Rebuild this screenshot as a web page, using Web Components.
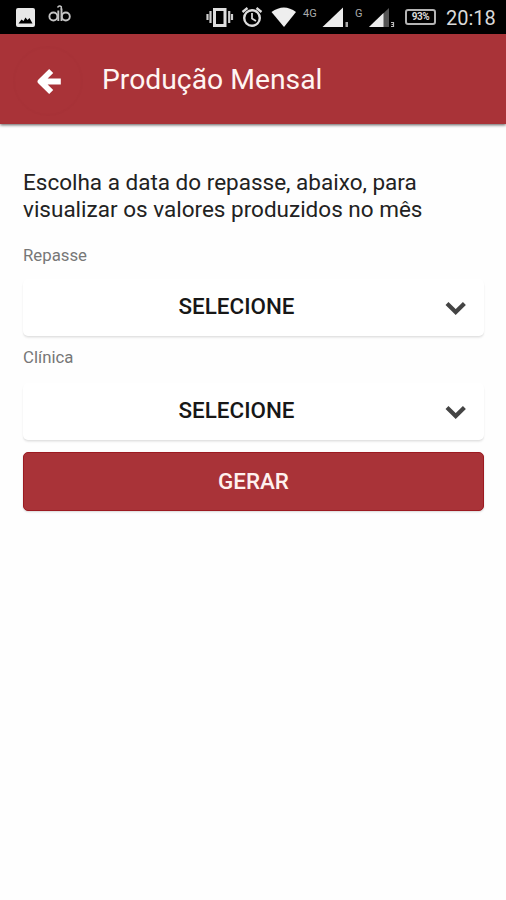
<!DOCTYPE html>
<html lang="pt-BR">
<head>
<meta charset="utf-8">
<title>Produção Mensal</title>
<style>
html, body { margin: 0; background: #fefefe; }
body { font-family: Roboto, "Liberation Sans", sans-serif; color: #222; }
</style>
</head>
<body>
<app-screen></app-screen>
<script>
const define = (name, html) => customElements.define(name, class extends HTMLElement {
  constructor() {
    super();
    this.attachShadow({ mode: 'open' }).innerHTML = html;
  }
});

define('status-bar', `
<style>
:host { display: flex; height: 34px; background: #000; color: #d9d9d9; align-items: flex-start; }
svg { display: block; flex: none; height: 34px; }
span { flex: none; white-space: nowrap; }
.space { flex: 1; }
.net { font-size: 11px; line-height: 12px; margin-top: 8px; color: #aaa; }
.battery { box-sizing: border-box; width: 31px; height: 16px; margin: 9px 10px 0 9px; border: 2px solid #b4b4b4; border-radius: 3px; font-size: 10px; line-height: 12px; font-weight: 700; text-align: center; letter-spacing: -.5px; }
.time { font-size: 20px; line-height: 24px; margin-top: 6px; width: 60px; }
</style>
<svg width="80" viewBox="0 0 80 34"><path fill="#e8e8e8" fill-rule="evenodd" d="M18 8H33Q35 8 35 10V25Q35 27 33 27H18Q16 27 16 25V10Q16 8 18 8ZM18.500 23.500H32.500L29.500 18L27.500 20L25.500 17.500L23.500 21L21.500 19.500Z"/>
<g fill="none" stroke="#c4c4c4" stroke-width="1.900"><circle cx="53.400" cy="16.500" r="4"/><circle cx="65.800" cy="16.500" r="4"/><path d="M58.300 10.500V21M61.500 8.500V21"/><path stroke-width="1.500" d="M57.500 7.500Q59.500 5 61.300 6.800V9.500"/></g></svg>
<div class="space"></div>
<svg width="98" viewBox="205 0 98 34"><path fill="none" stroke="#dedede" stroke-width="3" d="M214.500 9.500H225V25.500H214.500Z"/><path stroke="#cfcfcf" stroke-width="2.200" d="M210.500 11V23M229.200 11V23M207.500 14V20M232 14V20"/>
<g fill="none" stroke="#ddd"><circle cx="252" cy="18" r="7.800" stroke-width="2.400"/><path stroke-width="1.700" d="M252 13V18.500L256 21"/><path stroke-width="2.300" d="M242.500 12L247.500 8M256.500 8L261.500 12"/></g>
<path fill="#eee" d="M271.500 12Q284 3 296 12L284 27Z"/></svg>
<span class="net" style="width:19px">4G</span>
<svg width="33" viewBox="322 0 33 34"><path fill="#ececec" d="M322.500 27L343 7.500V27Z"/><path fill="#aaa" d="M345.500 22H348V27H345.500Z"/></svg>
<span class="net" style="width:13px">G</span>
<svg width="28" viewBox="368 0 28 34"><path fill="#555" d="M369 27L389 8V27Z"/><path fill="#ececec" d="M369 27L383.500 13V27Z"/><path fill="none" stroke="#bbb" stroke-width="1.200" d="M391 22.500H393.500V24.500H391.500M393.500 24.500V26.500H391"/></svg>
<span class="battery">93%</span>
<span class="time">20:18</span>
`);

define('app-bar', `
<style>
:host { display: flex; align-items: center; height: 90px; box-sizing: border-box; background: #a93338; color: #fff5f2; box-shadow: 0 1px 3px rgba(0,0,0,.65); }
svg { display: block; width: 102px; height: 90px; flex: none; }
h1 { margin: 0; padding-top: 2px; font-size: 28.3px; line-height: 34px; font-weight: 400; white-space: nowrap; }
</style>
<svg viewBox="0 0 102 90"><circle cx="48" cy="47" r="34" fill="none" stroke="#a02e33" stroke-opacity=".15" stroke-width="2"/><path fill="none" stroke="#fff" stroke-width="5.800" stroke-linejoin="round" d="M51.200 37L40.500 47.500L51.200 58M41 47.500H60.800"/></svg>
<h1><slot></slot></h1>
`);

define('select-field', `
<style>
:host { display: block; }
label { display: block; font-size: 16.8px; line-height: 20px; color: #777; }
button { display: grid; grid-template-columns: 1fr 58px; align-items: center; width: 100%; height: 57px; margin: var(--gap, 14px) 0 0; padding: 0; border: 0; border-radius: 5px; background: #fff; box-shadow: 0 2px 2px rgba(0,0,0,.08), 0 1px 1px rgba(0,0,0,.04); color: #171717; font: 500 22.4px/26px Roboto, "Liberation Sans", sans-serif; }
.value { padding-left: 24px; padding-bottom: 3px; }
svg { display: block; width: 58px; height: 56px; }
</style>
<label><slot name="label"></slot></label>
<button><span class="value"><slot></slot></span><svg viewBox="0 0 58 56"><path d="M21 23.500L29.700 32L38.400 23.500" fill="none" stroke="#444" stroke-width="4.200"/></svg></button>
`);

define('primary-button', `
<style>
:host { display: block; }
button { display: block; box-sizing: border-box; width: 100%; height: 59px; margin: 0; padding: 0 0 2px; border: 1px solid #9c1a21; border-radius: 5px; background: #a93338; box-shadow: 0 1px 2px rgba(0,0,0,.15); color: #fff1ee; font: 500 22.4px/26px Roboto, "Liberation Sans", sans-serif; }
</style>
<button><slot></slot></button>
`);

define('app-screen', `
<style>
:host { display: block; height: 900px; overflow: hidden; background: #fefefe; }
main { padding: 45px 22px 0 23px; }
p { margin: 0 0 23px; font-size: 22.5px; line-height: 26.500px; white-space: nowrap; }
select-field + select-field { margin-top: 11px; --gap: 16px; }
primary-button { margin-top: 12px; }
</style>
<status-bar></status-bar>
<app-bar>Produção Mensal</app-bar>
<main>
<p>Escolha a data do repasse, abaixo, para<br>visualizar os valores produzidos no mês</p>
<select-field><span slot="label">Repasse</span>SELECIONE</select-field>
<select-field><span slot="label">Clínica</span>SELECIONE</select-field>
<primary-button>GERAR</primary-button>
</main>
`);
</script>
</body>
</html>
